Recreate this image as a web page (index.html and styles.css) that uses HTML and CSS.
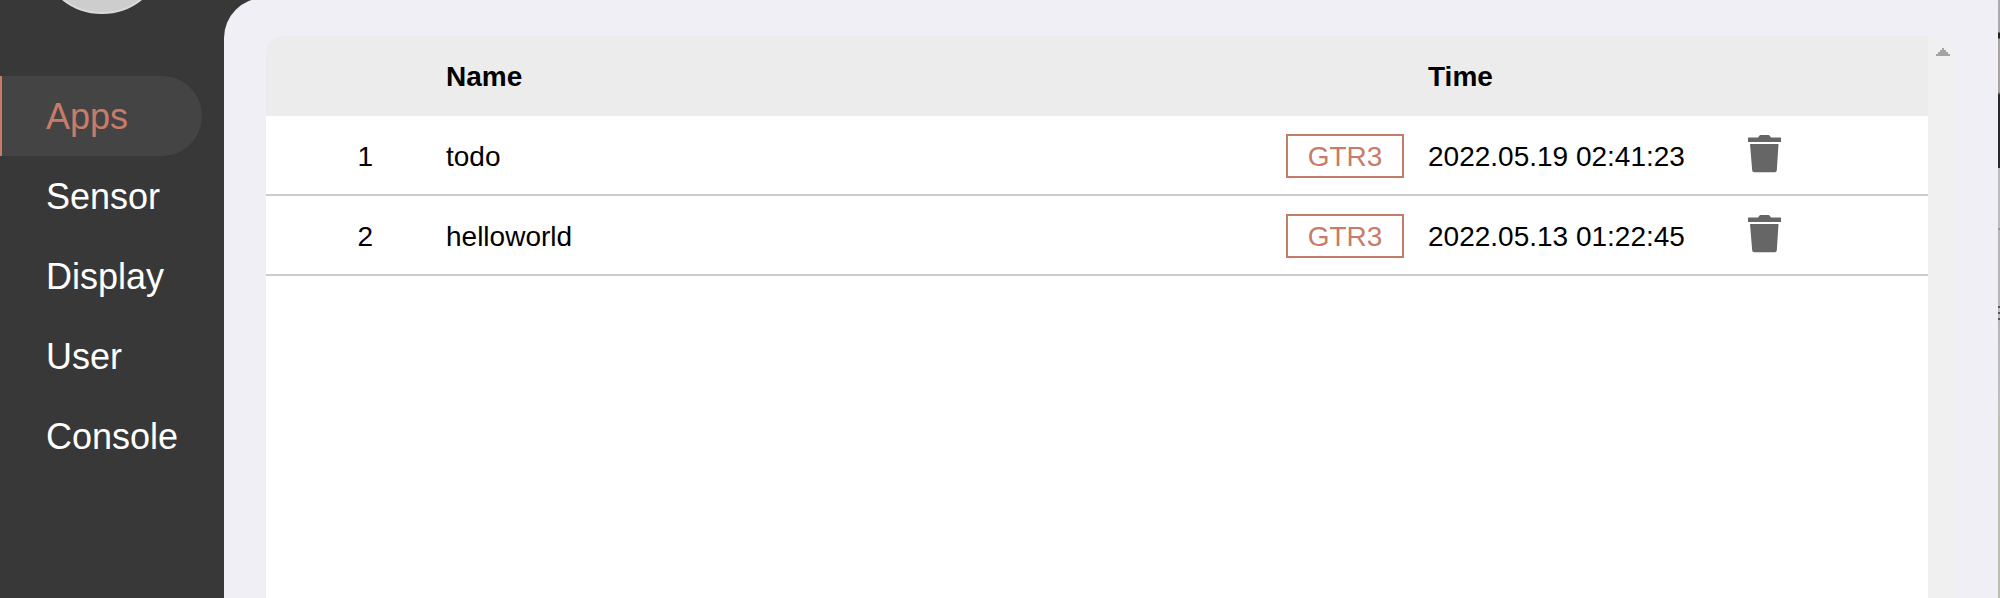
FILE: index.html
```html
<!DOCTYPE html>
<html lang="en">
<head>
<meta charset="utf-8">
<title>Apps</title>
<link rel="stylesheet" href="styles.css">
</head>
<body>
<div class="window">
  <aside class="sidebar">
    <div class="avatar"></div>
    <nav class="nav">
      <a class="nav-item active">Apps</a>
      <a class="nav-item">Sensor</a>
      <a class="nav-item">Display</a>
      <a class="nav-item">User</a>
      <a class="nav-item">Console</a>
    </nav>
  </aside>
  <main class="content">
    <section class="panel">
      <div class="table">
        <div class="row head">
          <span></span><span>Name</span><span></span><span>Time</span><span></span>
        </div>
        <div class="row">
          <span class="index">1</span><span>todo</span><span class="badge">GTR3</span><span>2022.05.19 02:41:23</span>
          <svg class="trash" viewBox="0 0 34 40"><path d="M0 3.500H10L12 1H21L23 3.500H33V8H0ZM2 10H30.500L28.800 36.500Q28.600 38.300 27 38.300H6.500Q4.400 38.300 4.200 36.500Z"/></svg>
        </div>
        <div class="row">
          <span class="index">2</span><span>helloworld</span><span class="badge">GTR3</span><span>2022.05.13 01:22:45</span>
          <svg class="trash" viewBox="0 0 34 40"><path d="M0 3.500H10L12 1H21L23 3.500H33V8H0ZM2 10H30.500L28.800 36.500Q28.600 38.300 27 38.300H6.500Q4.400 38.300 4.200 36.500Z"/></svg>
        </div>
      </div>
      <div class="scrollbar">
        <svg class="arrow" viewBox="0 0 14 8" shape-rendering="crispEdges"><path d="M6 0h2v2h2v2h2v2h2v2H0V6h2V4h2V2h2z"/></svg>
      </div>
    </section>
  </main>
  <div class="edge"></div>
</div>
</body>
</html>
```
FILE: styles.css
```css
* { box-sizing: border-box; }
body {
  margin: 0;
  font-family: "Liberation Sans", Arial, sans-serif;
  font-size: 28px;
  color: #000;
}
.window {
  display: flex;
  height: 598px;
  overflow: hidden;
  background: #383838;
}
.sidebar { width: 224px; }
.avatar {
  width: 128px;
  height: 128px;
  margin: -114px 0 62px 38px;
  border: 2px solid #dadada;
  border-radius: 50%;
  background: #cdcdcd;
}
.nav {
  display: flex;
  flex-direction: column;
  width: 202px;
}
.nav-item {
  height: 80px;
  padding-left: 44px;
  border-left: 2px solid transparent;
  line-height: 82px;
  font-size: 36px;
  color: #fff;
}
.nav-item.active {
  border-left-color: #c77c69;
  border-radius: 0 40px 40px 0;
  background: #444;
  color: #c77c69;
}
.content {
  flex: 1;
  height: 600px;
  margin-top: -2px;
  padding: 38px 42px 0;
  border-radius: 40px 0 0 0;
  background: #f0eff5;
}
.panel {
  display: flex;
  height: 100%;
  border-radius: 16px 16px 0 0;
  overflow: hidden;
  background: #fff;
}
.table { flex: 1; }
.row {
  display: grid;
  grid-template-columns: 180px 840px 142px 320px 34px;
  align-items: center;
  height: 80px;
  padding-top: 2px;
  border-bottom: 2px solid #ccc;
}
.row span { padding-top: 1px; }
.row.head {
  border: 0;
  padding-top: 1px;
  background: #ececec;
  font-weight: bold;
}
.row .index {
  padding-right: 73px;
  text-align: right;
}
.row .badge {
  width: 118px;
  height: 44px;
  border: 2px solid #c17c6a;
  line-height: 40px;
  text-align: center;
  color: #c77c69;
}
.trash {
  width: 34px;
  height: 40px;
  margin-bottom: 4px;
  fill: #666;
}
.scrollbar {
  width: 28px;
  padding: 12px 0 0 8px;
  background: #f0f0f0;
}
.arrow {
  display: block;
  width: 14px;
  height: 8px;
  fill: #a3a3a3;
}
/* sliver of the desktop visible beside the window */
.edge {
  width: 2px;
  background: linear-gradient(#aaaaba 0, #aaa 32px, #222 33px, #222 38px, #aaa49c 39px, #aaa49c 92px, #292929 95px, #292929 168px, #bcbcbd 168px, #bcbcbd 228px, #999 228px, #999 230px, #b6b6b6 230px, #b6b6b6 306px, #555 306px, #555 308px, #bbb 308px, #bbb 312px, #555 312px, #555 314px, #bbb 314px, #bbb 318px, #555 318px, #555 320px, #b6b6b6 320px, #bfbfc0 412px, #bdbfaf 414px, #bdbfaf 598px);
}
```
